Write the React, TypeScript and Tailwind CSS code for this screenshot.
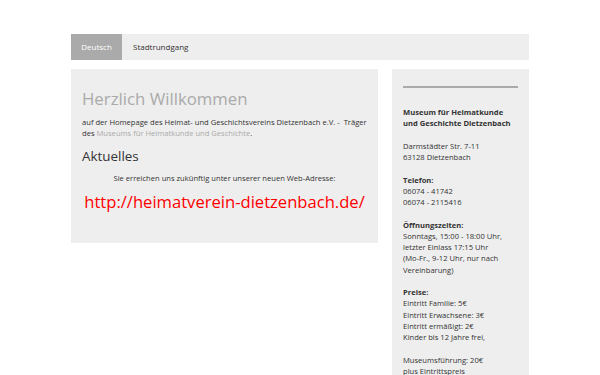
export default function App() {
  return (
    <div className="min-h-screen bg-white font-['Open_Sans',sans-serif] text-[#333]">
      <div className="mx-auto w-[458px] pt-[34px]">
        {/* Menu */}
        <nav className="flex h-[26px] items-stretch bg-[#eeeeee] text-[8px]">
          <span className="flex w-[51px] items-center justify-center bg-[#aaaaaa] text-white">Deutsch</span>
          <span className="flex items-center pl-[11px] text-[#333]">Stadtrundgang</span>
        </nav>

        <div className="mt-[9px] flex items-start gap-[14px]">
          {/* Main content */}
          <main className="w-[307px] bg-[#eeeeee] px-[11px] pt-[18px] pb-[29px]">
            <h1 className="text-[16.8px] leading-[24px] text-[#aaaaaa]">Herzlich Willkommen</h1>
            <p className="mt-[6px] text-[7.6px] leading-[11px]">
              auf der Homepage des Heimat- und Geschichtsvereins Dietzenbach e.V. -&nbsp; Träger des{" "}
              <span className="text-[#aaaaaa]">Museums für Heimatkunde und Geschichte</span>.
            </p>
            <h2 className="mt-[7px] text-[13.4px] leading-[20px]">Aktuelles</h2>
            <p className="mt-[7px] text-center text-[7.6px] leading-[11px]">
              Sie erreichen uns zukünftig unter unserer neuen Web-Adresse:
            </p>
            <p className="mt-[6px] whitespace-nowrap text-center text-[16.6px] leading-[24px] text-[#ff0000]">
              http://heimatverein-dietzenbach.de/
            </p>
          </main>

          {/* Sidebar */}
          <aside className="w-[137px] bg-[#eeeeee] px-[11px] pt-[17px] pb-[20px] text-[7.6px] leading-[11.25px]">
            <hr className="border-t-2 border-[#aaaaaa]" />
            <p className="mt-[19px] font-bold">
              Museum für Heimatkunde
              <br />
              und Geschichte Dietzenbach
            </p>
            <p className="mt-[11.25px]">
              Darmstädter Str. 7-11
              <br />
              63128 Dietzenbach
            </p>
            <p className="mt-[11.25px]">
              <b>Telefon:</b>
              <br />
              06074 - 41742
              <br />
              06074 - 2115416
            </p>
            <p className="mt-[11.25px]">
              <b>Öffnungszeiten:</b>
              <br />
              Sonntags, 15:00 - 18:00 Uhr,
              <br />
              letzter Einlass 17:15 Uhr
              <br />
              (Mo-Fr., 9-12 Uhr, nur nach Vereinbarung)
            </p>
            <p className="mt-[11.25px]">
              <b>Preise:</b>
              <br />
              Eintritt Familie: 5€
              <br />
              Eintritt Erwachsene: 3€
              <br />
              Eintritt ermäßigt: 2€
              <br />
              Kinder bis 12 Jahre frei,
            </p>
            <p className="mt-[11.25px]">
              Museumsführung: 20€
              <br />
              plus Eintrittspreis
            </p>
          </aside>
        </div>
      </div>
    </div>
  );
}
